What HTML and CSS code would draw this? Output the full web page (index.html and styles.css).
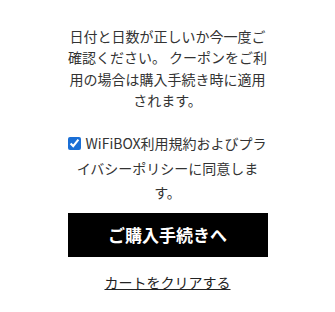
FILE: index.html
```html
<!DOCTYPE html>
<html lang="ja">
<head>
    <meta charset="UTF-8">
    <meta name="viewport" content="width=device-width, initial-scale=1.0">
    <title>カート</title>
    <link rel="stylesheet" href="styles.css">
</head>
<body>
    <div class="cart-footer">
        <p class="note">日付と日数が正しいか今一度ご確認ください。 クーポンをご利用の場合は購入手続き時に適用されます。</p>
        <label class="agree">
            <input type="checkbox" checked>
            WiFiBOX利用規約およびプライバシーポリシーに同意します。
        </label>
        <button class="checkout">ご購入手続きへ</button>
        <a class="clear" href="#">カートをクリアする</a>
    </div>
</body>
</html>
```

FILE: styles.css
```css
body {
    margin: 0;
    background: #fff;
    color: #333;
    font-family: "Noto Sans CJK JP", "Noto Sans", sans-serif;
}
.cart-footer {
    width: 200px;
    margin: 0 auto;
    padding-top: 26px;
    display: flex;
    flex-direction: column;
    align-items: center;
    text-align: center;
}
.note {
    margin: 0;
    font-size: 14px;
    line-height: 21.3px;
}
.agree {
    display: block;
    margin-top: 20px;
    font-size: 14px;
    line-height: 24.5px;
}
.agree input {
    width: 13px;
    height: 13px;
    margin: 0 1px 0 0;
    vertical-align: -1px;
    accent-color: #1a6fd6;
}
.checkout {
    width: 200px;
    height: 44px;
    margin-top: 8px;
    border: none;
    background: #000;
    color: #fff;
    font-family: inherit;
    font-size: 17px;
    font-weight: bold;
    cursor: pointer;
}
.clear {
    margin-top: 15px;
    font-size: 14px;
    line-height: 21px;
    color: #222;
    text-decoration: underline;
}
```
